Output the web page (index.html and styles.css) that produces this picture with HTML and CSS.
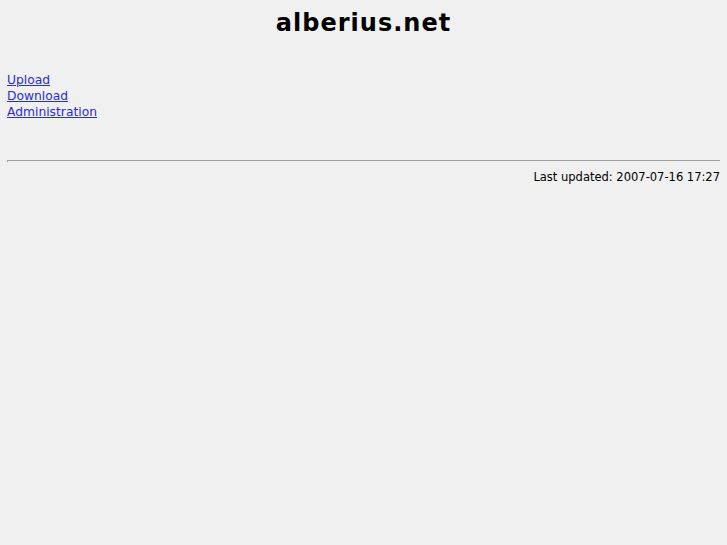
FILE: index.html
```html
<!DOCTYPE html>
<html>
<head>
<meta charset="utf-8">
<title>alberius.net</title>
<link rel="stylesheet" href="styles.css">
</head>
<body>
<h1 class="title">alberius.net</h1>
<ul class="menu">
<li><a href="#">Upload</a></li>
<li><a href="#">Download</a></li>
<li><a href="#">Administration</a></li>
</ul>
<hr class="rule">
<p class="updated">Last updated: 2007-07-16 17:27</p>
</body>
</html>
```
FILE: styles.css
```css
html { background: #f0f0f0; }
body {
  margin: 0 7px;
  font-family: "DejaVu Sans", sans-serif;
  font-size: 12px;
  line-height: 16px;
  color: #000;
}
.title {
  margin: 0;
  padding-top: 7px;
  height: 65px;
  text-align: center;
  font-size: 24px;
  line-height: 32px;
  letter-spacing: 1px;
  font-weight: bold;
}
.menu {
  list-style: none;
  margin: 0;
  padding: 0;
  font-size: 12.3px;
}
.menu li { height: 16px; }
.menu a { color: #2a2ae0; }
.rule {
  margin: 40px 0 0 0;
  border: 0;
  border-top: 1px solid #a0a0a0;
  border-left: 1px solid #a0a0a0;
  height: 1px;
}
.updated {
  margin: 7px 0 0 0;
  text-align: right;
  font-size: 11.5px;
  line-height: 16px;
}
```
